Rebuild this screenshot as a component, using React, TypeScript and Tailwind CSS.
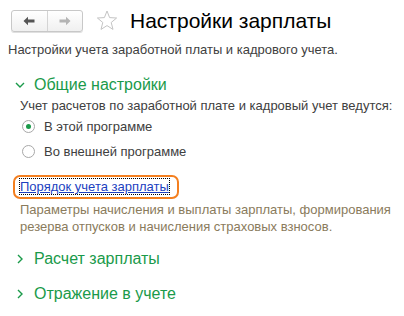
import React from "react";

const font = { fontFamily: '"Liberation Sans", Arial, sans-serif' };

function Chevron({ open }: { open: boolean }) {
  return (
    <svg width="10" height="10" viewBox="0 0 10 10" className="shrink-0">
      {open ? (
        <path d="M1 3 L5 7 L9 3" fill="none" stroke="#1a9a4a" strokeWidth="1.4" />
      ) : (
        <path d="M3 1 L7 5 L3 9" fill="none" stroke="#1a9a4a" strokeWidth="1.4" />
      )}
    </svg>
  );
}

function Radio({ checked, label }: { checked: boolean; label: string }) {
  return (
    <div className="flex items-center gap-[9px] h-[25px] pl-[22px]">
      <span className="w-[13px] h-[13px] rounded-full border border-[#a8a8a8] bg-white flex items-center justify-center">
        {checked && <span className="w-[5px] h-[5px] rounded-full bg-[#1a9a4a]" />}
      </span>
      <span className="text-[13px] text-[#404040]">{label}</span>
    </div>
  );
}

function Section({ title, open, children }: { title: string; open: boolean; children?: React.ReactNode }) {
  return (
    <div>
      <div className="flex items-center gap-[9px] pl-[15px] h-[24px]">
        <Chevron open={open} />
        <span className="text-[16px] text-[#1a9a4a]">{title}</span>
      </div>
      {children}
    </div>
  );
}

export default function App() {
  return (
    <div className="w-[404px] h-[316px] bg-white overflow-hidden" style={font}>
      <div className="flex items-center h-[40px] pt-[1px] pl-[11px]">
        <div className="flex h-[22px] w-[72px] rounded-[3px] border border-[#c8c8c8] bg-gradient-to-b from-white to-[#f0f0f0] shadow-[0_1px_0_#e0e0e0]">
          <div className="flex-1 flex items-center justify-center border-r border-[#d4d4d4]">
            <svg width="12" height="10" viewBox="0 0 12 10">
              <path d="M0.5 5 L5 0.8 L5 3.6 L11.5 3.6 L11.5 6.4 L5 6.4 L5 9.2 Z" fill="#555" />
            </svg>
          </div>
          <div className="flex-1 flex items-center justify-center">
            <svg width="12" height="10" viewBox="0 0 12 10">
              <path d="M11.5 5 L7 0.8 L7 3.6 L0.5 3.6 L0.5 6.4 L7 6.4 L7 9.2 Z" fill="#b4b4b4" />
            </svg>
          </div>
        </div>
        <svg width="22" height="21" viewBox="0 0 22 21" className="ml-[13px]">
          <path
            d="M11 1 L13.6 7.6 L20.6 8 L15.2 12.5 L17 19.4 L11 15.6 L5 19.4 L6.8 12.5 L1.4 8 L8.4 7.6 Z"
            fill="none"
            stroke="#c4c4c4"
            strokeWidth="1"
            strokeLinejoin="round"
          />
        </svg>
        <span className="ml-[12px] text-[21px] text-black leading-none">Настройки зарплаты</span>
      </div>
      <div className="pl-[8px] pt-[2px] h-[26px] text-[13px] text-[#404040] leading-[16px]">
        Настройки учета заработной платы и кадрового учета.
      </div>
      <div className="pt-[7px]">
        <Section title="Общие настройки" open>
          <div className="pl-[20px] text-[13px] text-[#404040] h-[17px] leading-[17px]">
            Учет расчетов по заработной плате и кадровый учет ведутся:
          </div>
          <Radio checked label="В этой программе" />
          <Radio checked={false} label="Во внешней программе" />
          <div className="pl-[13px] mt-[10px]">
            <div className="inline-flex items-center h-[24px] pl-[5px] pr-[8px] rounded-[7px] border-[2.5px] border-[#f47f1f]">
              <span className="text-[13px] text-[#1c3fbf] underline outline outline-1 outline-dotted outline-black leading-[15px]">
                Порядок учета зарплаты
              </span>
            </div>
          </div>
          <div className="pl-[20px] pt-[2px] text-[13px] leading-[17px] text-[#8a7b5c]">
            Параметры начисления и выплаты зарплаты, формирования
            <br />
            резерва отпусков и начисления страховых взносов.
          </div>
        </Section>
        <div className="mt-[12px]">
          <Section title="Расчет зарплаты" open={false} />
        </div>
        <div className="mt-[11px]">
          <Section title="Отражение в учете" open={false} />
        </div>
      </div>
    </div>
  );
}
